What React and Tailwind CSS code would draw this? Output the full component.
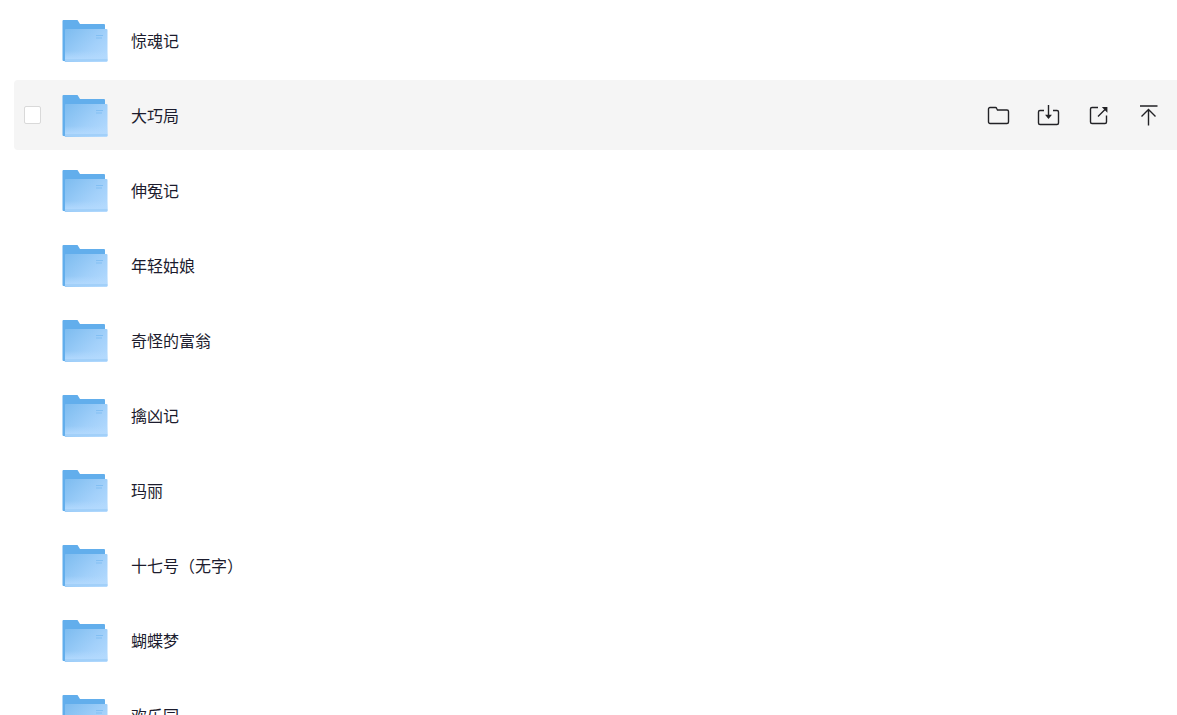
import { useState } from 'react';

const folders = [
  '惊魂记',
  '大巧局',
  '伸冤记',
  '年轻姑娘',
  '奇怪的富翁',
  '擒凶记',
  '玛丽',
  '十七号（无字）',
  '蝴蝶梦',
  '欢乐园',
];

export default function App() {
  const [active, setActive] = useState('大巧局');
  const [checked, setChecked] = useState([]);

  const toggle = (name) => {
    setChecked((prev) => (prev.includes(name) ? prev.filter((n) => n !== name) : [...prev, name]));
  };

  return (
    <main className="h-screen overflow-hidden bg-white font-['Noto_Sans','Noto_Sans_CJK_SC',sans-serif]">
      {/* shared gradients for the folder icons */}
      <svg className="absolute size-0" aria-hidden="true">
        <defs>
          <linearGradient id="folder-front" x1="0" y1="0.1" x2="1" y2="0.9">
            <stop offset="0" stopColor="#7fbdf0" />
            <stop offset="0.6" stopColor="#a2d0fa" />
            <stop offset="1" stopColor="#b4dafe" />
          </linearGradient>
          <linearGradient id="folder-fade" x1="0" y1="0" x2="0" y2="1">
            <stop offset="0" stopColor="#b4dafe" stopOpacity="0" />
            <stop offset="1" stopColor="#b4dafe" stopOpacity="0.85" />
          </linearGradient>
        </defs>
      </svg>

      <ul className="flex flex-col gap-[5px] pt-[5px] pl-3.5">
        {folders.map((name) => (
          <FolderRow
            key={name}
            name={name}
            active={name === active}
            checked={checked.includes(name)}
            onHover={() => setActive(name)}
            onToggle={() => toggle(name)}
          />
        ))}
      </ul>
    </main>
  );
}

function FolderRow({ name, active, checked, onHover, onToggle }) {
  return (
    <li
      onMouseEnter={onHover}
      className={`flex h-[70px] shrink-0 items-center gap-[21px] rounded-l pl-2.5 pr-[18px] ${active ? 'bg-[#f5f5f5]' : ''}`}
    >
      <input
        type="checkbox"
        aria-label={name}
        checked={checked}
        onChange={onToggle}
        className={`h-[18px] w-[17px] shrink-0 appearance-none rounded-xs border border-[#d9d9d9] bg-white checked:bg-[#62aeec] ${
          active || checked ? '' : 'invisible'
        }`}
      />
      <div className="flex grow items-center gap-[23px] pt-0.5">
        <FolderIcon />
        <a href="#" className="text-base text-[#1c1c2e]">
          {name}
        </a>

        {active && (
          <div className="ml-auto flex items-center gap-7 text-[#222226]">
            <ActionButton label="打开">
              <path d="M3 2.5h5.500q.8 0 1.200 1l.8 1.500h9.500a1.500 1.500 0 0 1 1.500 1.500v10.500a1.500 1.500 0 0 1-1.500 1.500h-17a1.500 1.500 0 0 1-1.500-1.500v-13a1.500 1.500 0 0 1 1.500-1.500z" />
            </ActionButton>
            <ActionButton label="下载">
              <path d="M7 5.500h-4a1.500 1.500 0 0 0-1.500 1.500v11a1.500 1.500 0 0 0 1.500 1.500h17a1.500 1.500 0 0 0 1.500-1.500v-11a1.500 1.500 0 0 0-1.500-1.500h-4M11.500 0v11" />
              <path d="M9.500 10.500h4l-2 2.500z" fill="currentColor" />
            </ActionButton>
            <ActionButton label="分享">
              <path d="M11 2.500h-6a1.500 1.500 0 0 0-1.500 1.500v13a1.500 1.500 0 0 0 1.500 1.500h13a1.500 1.500 0 0 0 1.500-1.500v-6.500M11 11.500l7.500-7.500" />
              <path d="M16.500 2.800h3.200v3.200z" fill="currentColor" />
            </ActionButton>
            <ActionButton label="置顶">
              <path d="M3 1h17.500M11.500 20.500v-16M4.500 11.500l7-7 7 7" />
            </ActionButton>
          </div>
        )}
      </div>
    </li>
  );
}

function ActionButton({ label, children }) {
  return (
    <button type="button" aria-label={label} className="size-[22px]">
      <svg viewBox="0 0 22 22" className="size-[22px] overflow-visible" fill="none" stroke="currentColor" strokeWidth="1.4">
        {children}
      </svg>
    </button>
  );
}

function FolderIcon() {
  return (
    <svg viewBox="0 0 46 42" className="h-[42px] w-[46px] shrink-0" aria-hidden="true">
      <path d="M1.500 0h14l2.500 4h24a1 1 0 0 1 1 1v36h-41.500a1 1 0 0 1-1-1v-39a1 1 0 0 1 1-1z" fill="#62aeec" />
      <path d="M4 9h40.500a1 1 0 0 1 1 1v31a1 1 0 0 1-1 1h-42l.5-1v-31a1 1 0 0 1 1-1z" fill="url(#folder-front)" />
      <path d="M3 31h42.500v8h-42.500z" fill="url(#folder-fade)" />
      <path d="M3 39h42.500v2h-42.500z" fill="#a2d0f9" />
      <path d="M34 15.500h7M34 18h6" stroke="#82bff3" strokeWidth="1" />
    </svg>
  );
}
